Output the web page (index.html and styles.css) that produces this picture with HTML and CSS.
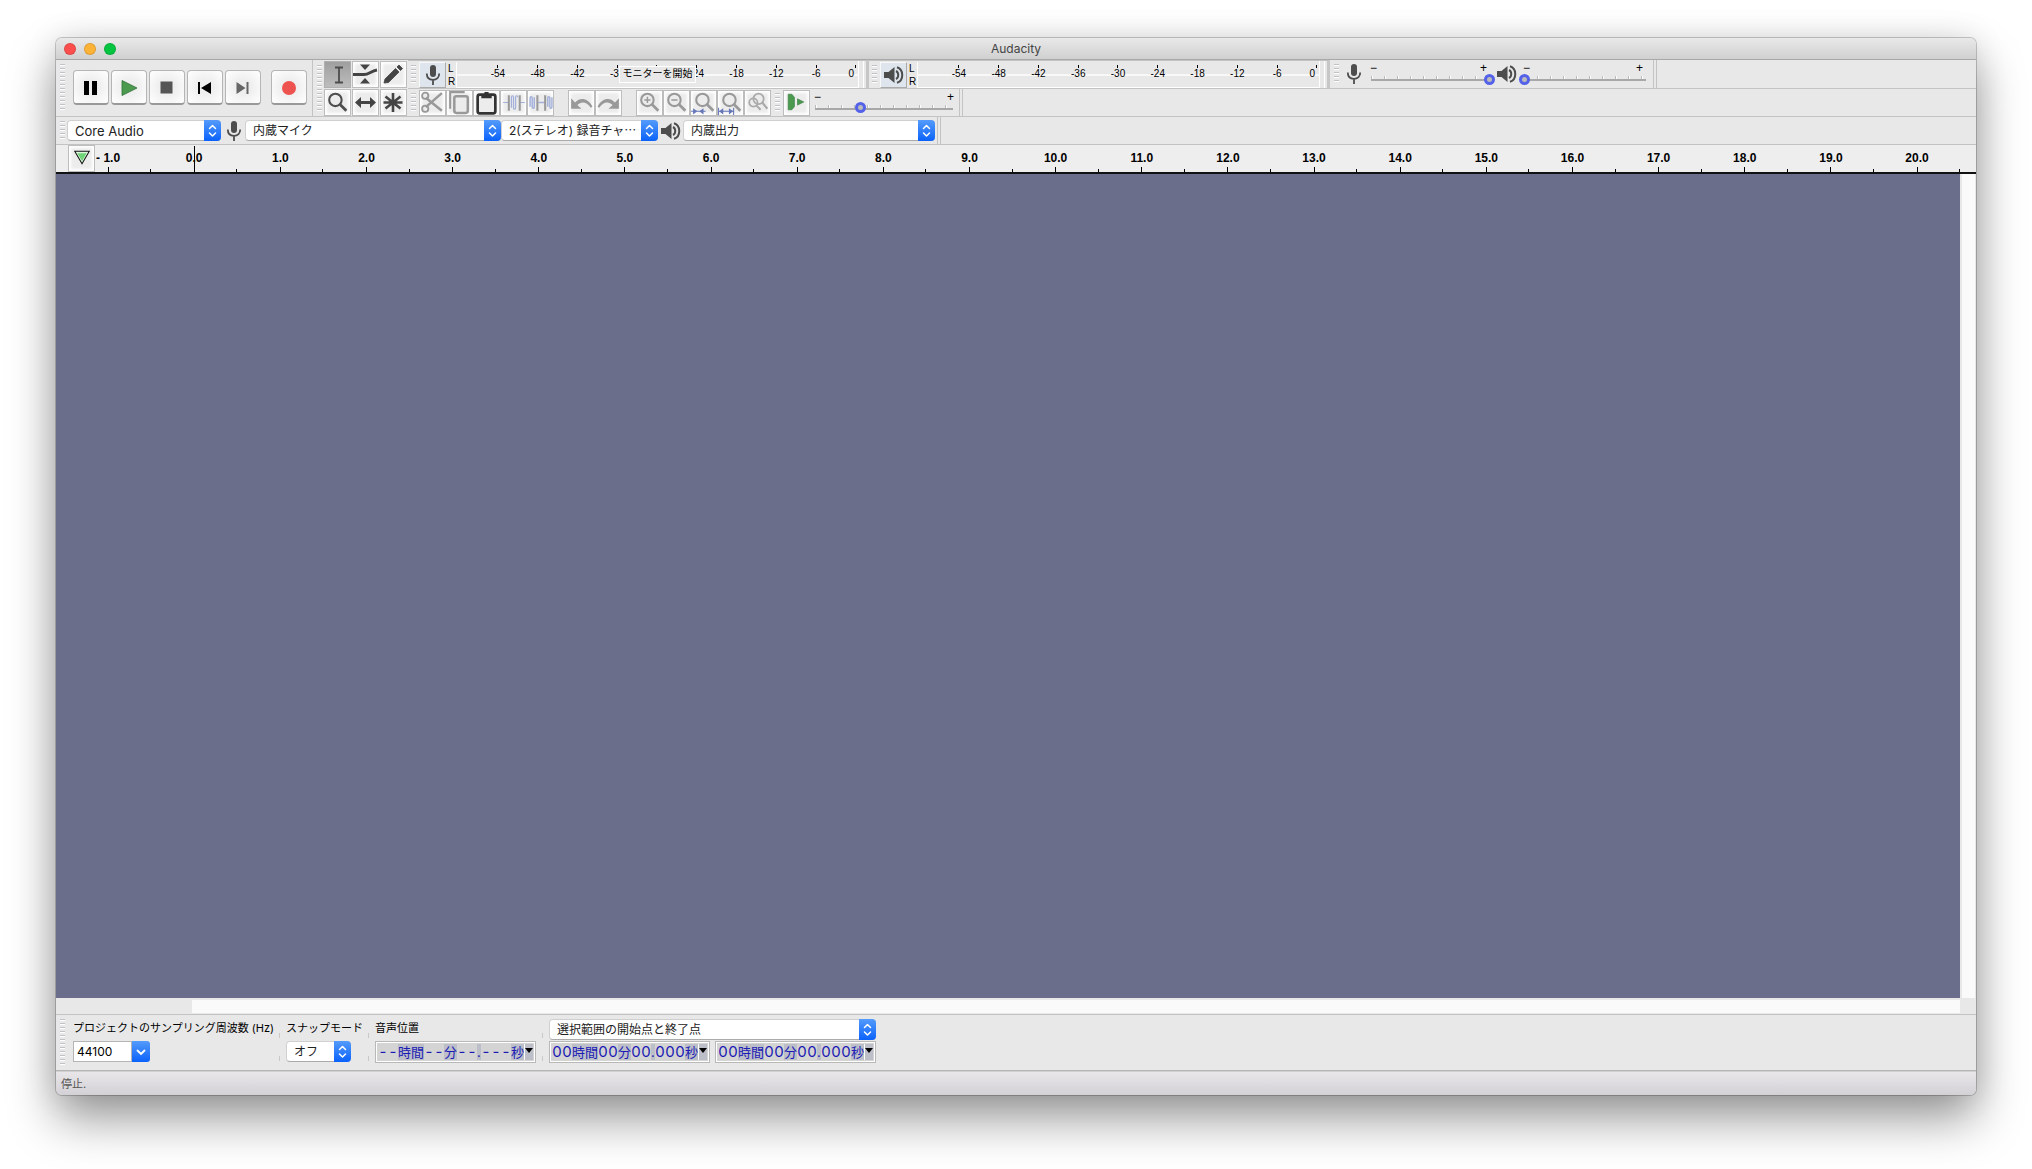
FILE: index.html
```html
<!DOCTYPE html>
<html lang="ja">
<head>
<meta charset="utf-8">
<title>Audacity</title>
<link rel="stylesheet" href="styles.css">
</head>
<body>
<svg class="defs" aria-hidden="true">
  <symbol id="cap" viewBox="0 0 17 21"><path d="M5.500 8.500l3-3 3 3M5.500 13l3 3 3-3" fill="none" stroke="#fff" stroke-width="1.500" stroke-linecap="round" stroke-linejoin="round"/></symbol>
  <symbol id="mic" viewBox="0 0 16 20"><rect x="5" y="0" width="6" height="12" rx="3" fill="#4d4d4d"/><path d="M1.800 8.500c0 4 2.500 6.300 6.200 6.300s6.200-2.300 6.200-6.300M8 15v5" fill="none" stroke="#4d4d4d" stroke-width="1.800"/></symbol>
  <symbol id="speaker" viewBox="0 0 20 18"><path d="M0 6h4.500L10.500 1v16L4.500 12H0z" fill="#4d4d4d"/><path d="M12 5c3 1.500 3 6.500 0 8M13 1.200c7 2.200 7 13.400 0 15.600" fill="none" stroke="#4d4d4d" stroke-width="2"/></symbol>
  <symbol id="lens" viewBox="0 0 26 26"><circle cx="11" cy="10.500" r="6" fill="none" stroke="currentColor" stroke-width="2"/><path d="M15.500 15l6 6" stroke="currentColor" stroke-width="2.600"/></symbol>
</svg>
<main class="window">
  <header class="titlebar">
    <div class="lights"><button class="light red" aria-label="閉じる"></button><button class="light amber" aria-label="最小化"></button><button class="light green" aria-label="拡大"></button></div>
    <h1>Audacity</h1>
  </header>

  <div class="dock">
    <section class="transport">
      <i class="grip"></i>
      <button class="big" aria-label="一時停止"><svg viewBox="0 0 36 35"><path d="M11 11h5v14h-5zM19 11h5v14h-5z"/></svg></button>
      <button class="big" aria-label="再生"><svg viewBox="0 0 36 35"><path d="M11 10.500v15l15-7.500z" fill="#4b9a50" stroke="#2d6e35" stroke-width=".8"/></svg></button>
      <button class="big" aria-label="停止"><svg viewBox="0 0 36 35"><path d="M11.500 11.500h12v12h-12z" fill="#555"/></svg></button>
      <button class="big" aria-label="先頭へ"><svg viewBox="0 0 36 35"><path d="M11 12h2v12h-2zM24 12v12l-10-6z"/></svg></button>
      <button class="big" aria-label="末尾へ"><svg viewBox="0 0 36 35"><path d="M11.500 12v12l9-6zM21.500 12h2v12h-2z" fill="#666"/></svg></button>
      <button class="big record" aria-label="録音"><svg viewBox="0 0 36 35"><circle cx="18" cy="18" r="7" fill="#ee524f"/></svg></button>
    </section>

    <section class="tools">
      <i class="grip"></i>
      <div class="tool-grid">
        <button class="tool on" aria-label="選択"><svg viewBox="0 0 27 27"><path d="M11 6.500h8M11 21.500h8M15 6.500v15" stroke="#4d4d4d" stroke-width="1.800"/></svg></button>
        <button class="tool" aria-label="エンベロープ"><svg viewBox="0 0 27 27"><path d="M8 3.500h10l-5 5.500zM8 22.500h10l-5-5.500z" fill="#444"/><path d="M1 13.500h11c5 0 7-3.500 13-4.500" fill="none" stroke="#444" stroke-width="3"/></svg></button>
        <button class="tool" aria-label="描画"><svg viewBox="0 0 27 27"><path d="M4 22l1-4L15.500 7.500l3.500 3.500L8.500 21.500zM17 6l2-2 3.500 3.500-2 2z" fill="#444" stroke="#444" stroke-width=".8"/></svg></button>
        <button class="tool dark" aria-label="ズーム"><svg viewBox="0 0 26 26"><use href="#lens"/></svg></button>
        <button class="tool" aria-label="タイムシフト"><svg viewBox="0 0 27 27"><path d="M3 13.500l6-5.500v4h9V8l6 5.500-6 5.500v-4H9v4z" fill="#444"/></svg></button>
        <button class="tool" aria-label="マルチツール"><svg viewBox="0 0 27 27"><path d="M13 4v19M3.500 13.500h19M5.500 7.500l15 12M20.500 7.500l-15 12" stroke="#444" stroke-width="2.600"/></svg></button>
      </div>
    </section>

    <div class="bars">
      <div class="bar">
        <section class="meter-bar">
          <i class="grip"></i>
          <button class="tool tinted" aria-label="録音メーター"><svg class="mic"><use href="#mic"/></svg></button>
          <div class="lr"><span>L</span><span>R</span></div>
          <div class="meter"><div class="scale"><span>-54</span><span>-48</span><span>-42</span><span>-36</span><span></span><span>-24</span><span>-18</span><span>-12</span><span>-6</span><span class="zero">0</span></div><div class="monitor">モニターを開始</div></div>
          <i class="rails"></i>
        </section>
        <section class="meter-bar play">
          <i class="grip"></i>
          <button class="tool tinted" aria-label="再生メーター"><svg class="speaker"><use href="#speaker"/></svg></button>
          <div class="lr"><span>L</span><span>R</span></div>
          <div class="meter"><div class="scale"><span>-54</span><span>-48</span><span>-42</span><span>-36</span><span>-30</span><span>-24</span><span>-18</span><span>-12</span><span>-6</span><span class="zero">0</span></div></div>
          <i class="rails"></i>
        </section>
        <section class="mixer">
          <i class="grip"></i>
          <svg class="mic"><use href="#mic"/></svg>
          <div class="slider first"><div class="signs"><span>−</span><span>+</span></div><input type="range" aria-label="録音音量" value="100"></div>
          <svg class="speaker"><use href="#speaker"/></svg>
          <div class="slider second"><div class="signs"><span>−</span><span>+</span></div><input type="range" aria-label="再生音量" value="0"></div>
        </section>
      </div>
      <div class="bar">
        <section class="edit">
          <i class="grip"></i>
          <div class="group">
            <button class="tool" aria-label="切り取り"><svg viewBox="0 0 26 26"><path d="M6.500 8.500L22 21M6.500 17.500L22 4" stroke="#999" stroke-width="2.400"/><circle cx="6" cy="6.500" r="3" fill="none" stroke="#999" stroke-width="1.800"/><circle cx="6" cy="19" r="3" fill="none" stroke="#999" stroke-width="1.800"/></svg></button>
            <button class="tool" aria-label="コピー"><svg viewBox="0 0 26 26"><rect x="8" y="7" width="13" height="16" rx="2" fill="none" stroke="#999" stroke-width="2.400"/><path d="M4 19V3h14" fill="none" stroke="#999" stroke-width="2"/></svg></button>
            <button class="tool" aria-label="貼り付け"><svg viewBox="0 0 26 26"><rect x="4.500" y="5.500" width="17" height="18" rx="2" fill="none" stroke="#333" stroke-width="2.600"/><path d="M8 9V5h3V3h4v2h3v4z" fill="#333"/></svg></button>
            <button class="tool" aria-label="トリム"><svg viewBox="0 0 26 26"><path d="M3 13h5M19 13h5M11 18V8c0-2 2-2 2 0v10c0 2 2 2 2 0V8c0-2 2-2 2 0" fill="none" stroke="#a3b0da" stroke-width="1.200"/><path d="M8.500 6v15M19 6v15" stroke="#999" stroke-width="2"/></svg></button>
            <button class="tool" aria-label="無音化"><svg viewBox="0 0 26 26"><path d="M3 17V9c0-2 2-2 2 0v8c0 2 2 2 2 0V8M20 17V9c0-2 2-2 2 0v8c0 2 2 2 2 0V8M11 13h6" fill="none" stroke="#a3b0da" stroke-width="1.400"/><path d="M10 6v15M17.500 6v15" stroke="#999" stroke-width="2"/></svg></button>
          </div>
          <div class="group">
            <button class="tool" aria-label="元に戻す"><svg viewBox="0 0 26 26"><path d="M3 9v10h10l-4-3.500c4-4 9-3 13 2.500l1.500-1C19.500 9 12 7.500 6.800 13z" fill="#999"/></svg></button>
            <button class="tool" aria-label="やり直し"><svg viewBox="0 0 26 26"><path d="M23 9v10H13l4-3.500c-4-4-9-3-13 2.500L2.500 17C6.500 9 14 7.500 19.200 13z" fill="#999"/></svg></button>
          </div>
          <div class="group">
            <button class="tool" aria-label="ズームイン"><svg viewBox="0 0 26 26"><use href="#lens"/><path d="M8 10.500h6M11 7.500v6" stroke="#999" stroke-width="1.400"/></svg></button>
            <button class="tool" aria-label="ズームアウト"><svg viewBox="0 0 26 26"><use href="#lens"/><path d="M8 10.500h6" stroke="#999" stroke-width="1.400"/></svg></button>
            <button class="tool" aria-label="選択範囲に合わせる"><svg viewBox="0 0 26 26"><use href="#lens" x="1"/><path d="M1 21.500h14" stroke="#6477b8"/><path d="M3 18.500l4 3-4 3zM13 18.500l-4 3 4 3z" fill="#6477b8"/></svg></button>
            <button class="tool" aria-label="プロジェクトに合わせる"><svg viewBox="0 0 26 26"><use href="#lens" x="1"/><path d="M2 21.500h14M1.500 18v7M16 18v7" stroke="#6477b8"/><path d="M6 18.500l-4 3 4 3zM11.500 18.500l4 3-4 3z" fill="#6477b8"/></svg></button>
            <button class="tool" aria-label="ズーム切替"><svg viewBox="0 0 26 26"><circle cx="9" cy="13" r="4" fill="none" stroke="#aaa" stroke-width="1.700"/><circle cx="14" cy="9.500" r="5" fill="none" stroke="#aaa" stroke-width="1.700"/><path d="M12 16l4 4M17.500 13l5 6" stroke="#aaa" stroke-width="2"/></svg></button>
          </div>
        </section>
        <section class="speed">
          <i class="grip"></i>
          <button class="tool" aria-label="指定速度で再生"><svg viewBox="0 0 26 26"><path d="M5 5h3.500l2.500 3v9l-2.500 3H5zM14 9.500v6l6-3z" fill="#4b9a50" stroke="#397c40" stroke-width=".6"/></svg></button>
          <div class="slider third"><div class="signs"><span>−</span><span>+</span></div><input type="range" aria-label="再生速度" value="33"></div>
        </section>
      </div>
    </div>
  </div>

  <div class="bar devices">
    <section class="device-set">
      <i class="grip"></i>
      <span class="popup host"><select aria-label="オーディオホスト"><option>Core Audio</option></select><svg><use href="#cap"/></svg></span>
      <svg class="mic"><use href="#mic"/></svg>
      <span class="popup input"><select aria-label="録音デバイス"><option>内蔵マイク</option></select><svg><use href="#cap"/></svg></span>
      <span class="popup channels"><select aria-label="録音チャンネル"><option>2(ステレオ) 録音チャ⋯</option></select><svg><use href="#cap"/></svg></span>
      <svg class="speaker"><use href="#speaker"/></svg>
      <span class="popup output"><select aria-label="再生デバイス"><option>内蔵出力</option></select><svg><use href="#cap"/></svg></span>
    </section>
  </div>

  <div class="ruler">
    <div class="ticks"><span>- 1.0</span><span class="cursor">0.0</span><span>1.0</span><span>2.0</span><span>3.0</span><span>4.0</span><span>5.0</span><span>6.0</span><span>7.0</span><span>8.0</span><span>9.0</span><span>10.0</span><span>11.0</span><span>12.0</span><span>13.0</span><span>14.0</span><span>15.0</span><span>16.0</span><span>17.0</span><span>18.0</span><span>19.0</span><span>20.0</span></div>
    <button class="tool pin" aria-label="再生ヘッド"><svg viewBox="0 0 26 26"><path d="M6.500 6h14l-7 12z" fill="#dcf5dc" stroke="#111"/><path d="M9 8h9l-4.500 7.500z" fill="#6fd477"/></svg></button>
  </div>

  <div class="tracks"><div class="canvas"></div><div class="vscroll"></div></div>
  <div class="hscroll"><div class="thumb"></div></div>

  <section class="selection">
    <i class="grip"></i>
    <div class="field rate"><label for="rate">プロジェクトのサンプリング周波数 (Hz)</label>
      <span class="combo"><input id="rate" type="text" value="44100"><button aria-label="一覧"><svg viewBox="0 0 18 21"><path d="M5.500 9.500l3.500 3.500 3.500-3.500" fill="none" stroke="#fff" stroke-width="1.800" stroke-linecap="round"/></svg></button></span></div>
    <i class="sep"></i>
    <div class="field snap"><label for="snap">スナップモード</label>
      <span class="popup"><select id="snap"><option>オフ</option></select><svg><use href="#cap"/></svg></span></div>
    <i class="sep"></i>
    <div class="field position"><span class="label">音声位置</span>
      <div class="time"><b>-</b><b>-</b><em>時間</em><b>-</b><b>-</b><em>分</em><b>-</b><b>-</b><em class="dot">.</em><b>-</b><b>-</b><b>-</b><em>秒</em><button aria-label="表示形式"></button></div></div>
    <i class="sep"></i>
    <div class="field range"><span class="popup"><select aria-label="選択範囲の表示"><option>選択範囲の開始点と終了点</option></select><svg><use href="#cap"/></svg></span>
      <div class="pair">
        <div class="time"><b>0</b><b>0</b><em>時間</em><b>0</b><b>0</b><em>分</em><b>0</b><b>0</b><em class="dot">.</em><b>0</b><b>0</b><b>0</b><em>秒</em><button aria-label="表示形式"></button></div>
        <div class="time"><b>0</b><b>0</b><em>時間</em><b>0</b><b>0</b><em>分</em><b>0</b><b>0</b><em class="dot">.</em><b>0</b><b>0</b><b>0</b><em>秒</em><button aria-label="表示形式"></button></div>
      </div></div>
  </section>
  <footer class="status">停止.</footer>
</main>
</body>
</html>
```
FILE: styles.css
```css
* { box-sizing: border-box; }
body {
  margin: 0;
  min-height: 100vh;
  padding: 38px 56px 74px;
  display: flex;
  background: #fff;
  color: #000;
  font: 12px/16px Inter, "Noto Sans CJK JP", sans-serif;
  overflow: hidden;
}
button, select, input { margin: 0; padding: 0; border: 0; font: inherit; color: inherit; appearance: none; border-radius: 0; }
svg { display: block; flex: none; }
.defs { position: absolute; width: 0; height: 0; }
.mic { width: 16px; height: 20px; }
.speaker { width: 20px; height: 18px; }

.window {
  flex: 1;
  min-width: 0;
  display: flex;
  flex-direction: column;
  background: #e8e8e8;
  border-radius: 6px;
  overflow: hidden;
  box-shadow: 0 0 0 1px rgba(0,0,0,.2), 0 24px 48px rgba(0,0,0,.4), 0 0 32px rgba(0,0,0,.1);
}
.titlebar {
  position: relative;
  height: 22px;
  display: flex;
  align-items: center;
  justify-content: center;
  background: linear-gradient(#e9e9e9, #d0d0d0);
  border-bottom: 1px solid #a8a8a8;
}
.titlebar h1 { margin: 0; font-size: 12px; font-weight: 400; color: #444; }
.lights { position: absolute; left: 8px; top: 5px; display: flex; gap: 8px; }
.light { width: 12px; height: 12px; border-radius: 6px; border: 1px solid rgba(0,0,0,.12); }
.red { background: #fc4f4d; }
.amber { background: #fdb338; }
.green { background: #04c440; }

.grip {
  flex: none;
  width: 5px;
  height: 20px;
  background: repeating-linear-gradient(#c2c2c6 0 1px, #fff 1px 2px, transparent 2px 4px);
}
.dock { display: flex; height: 57px; border-bottom: 1px solid #c3c3c3; }
.transport {
  width: 257px;
  display: flex;
  align-items: center;
  gap: 2px;
  padding: 0 0 2px 4px;
  border-right: 1px solid #c3c3c3;
}
.transport .grip { height: 46px; margin-right: 6px; }
.big {
  width: 36px;
  height: 35px;
  border: 1px solid #b5b5b5;
  border-bottom: 2px solid #999;
  border-radius: 4px;
  background: radial-gradient(#eee 30%, #fff);
}
.big svg { width: 36px; height: 35px; margin: -1px; }
.record { margin-left: 8px; }
.tools { width: 95px; display: flex; align-items: center; gap: 2px; padding-left: 4px; }
.tools .grip { height: 46px; }
.tool-grid { display: grid; grid-template-columns: repeat(3, 27px); gap: 1px; }
.tool {
  flex: none;
  width: 27px;
  height: 27px;
  display: flex;
  align-items: center;
  justify-content: center;
  border: 1px solid #bdbdbd;
  background: #ececec;
  box-shadow: inset 0 0 3px 2px #fff;
  color: #999;
}
.tool > svg[viewBox] { width: 27px; height: 27px; }
.tool.dark { color: #4d4d4d; }
.tool.on { background: linear-gradient(#9f9f9f, #bdbdbd); box-shadow: none; border-color: #b0b0b0; }
.tool.tinted { background: #dfe5ec; box-shadow: none; border-color: #f8f8f8 #aaa #aaa #f8f8f8; }

.bars { flex: 1; min-width: 0; }
.bar { height: 28px; display: flex; border-bottom: 1px solid #c3c3c3; }
.bar section { display: flex; align-items: center; flex: none; }
.bars .bar { height: 29px; }
.bars .bar:last-child { height: 27px; border: 0; }
.meter-bar { width: 461px; padding-left: 3px; border-right: 3px solid #c6c6c6; border-top: 1px solid #c3c3c3; }
.meter-bar .tool { margin-left: 3px; height: 26px; }
.lr {
  width: 10px;
  padding-left: 2px;
  display: flex;
  flex-direction: column;
  font: 10px/13px "Liberation Sans", Arial, sans-serif;
}
.meter {
  position: relative;
  width: 402px;
  height: 26px;
  padding-left: 21px;
  border-left: 1px solid #fff;
  border-bottom: 1px solid #fff;
  background: linear-gradient(#f8f8f8, #f8f8f8) 0 12px / 100% 2px no-repeat;
}
.scale {
  width: 378px;
  display: grid;
  grid-template-columns: repeat(9, 1fr) 20px;
  padding-top: 3px;
  font: 10px/12px "Liberation Sans", Arial, sans-serif;
}
.scale span { text-align: center; padding-top: 3px; background: linear-gradient(#000, #000) 50% 0 / 1px 3px no-repeat; }
.scale .zero { text-align: right; padding-right: 2px; background-position: 100% 0; }
.monitor {
  position: absolute;
  left: 162px;
  top: 4px;
  width: 77px;
  height: 17px;
  border: 1px solid #fff;
  background: #e8e8e8;
  font-size: 10px;
  line-height: 12px;
  text-align: center;
  white-space: nowrap;
}
.rails { width: 6px; height: 27px; border-left: 1px solid #fff; border-right: 1px solid #fff; }
.mixer { width: 327px; padding-left: 4px; border-right: 4px double #c3c3c3; }
.mixer > .mic { margin: 0 4px 0 7px; }
.slider { height: 24px; padding-top: 1px; }
.signs { display: flex; justify-content: space-between; padding: 0 8px 0 4px; font: 12px/10px "Liberation Sans", Arial, sans-serif; }
.slider input {
  display: block;
  width: 100%;
  height: 12px;
  background:
    linear-gradient(#a8a8a8, #a8a8a8) 50% 6px / calc(100% - 10px) 2px no-repeat,
    repeating-linear-gradient(90deg, transparent 0 5px, #bbb 5px 6px, #fff 6px 7px, transparent 7px 13px) 0 3px / calc(100% - 5px) 3px no-repeat;
}
.slider input::-webkit-slider-thumb {
  appearance: none;
  width: 11px;
  height: 11px;
  border: 3px solid #5362e8;
  border-radius: 6px;
  background: #bbb;
}
.slider.first { width: 129px; margin-right: 2px; }
.slider.second { width: 132px; margin-left: 2px; }
.slider.third { width: 148px; }
.edit { padding-left: 3px; gap: 14px; }
.edit .grip { margin-right: -11px; }
.group { display: flex; }
.edit .tool, .speed .tool { height: 26px; }
.speed { width: 192px; padding-left: 4px; border-right: 4px double #c3c3c3; }
.speed .grip { margin-right: 3px; }
.speed .signs { padding-right: 4px; }

.popup { position: relative; display: block; flex: none; height: 21px; }
.popup select {
  width: 100%;
  height: 100%;
  padding: 0 20px 0 7px;
  border: 1px solid #d0d0d0;
  border-bottom-color: #aaa;
  border-radius: 4px;
  background: #fff;
  color: #222;
}
.popup svg {
  position: absolute;
  right: 0;
  top: 0;
  width: 17px;
  height: 21px;
  border-radius: 0 4px 4px 0;
  background: linear-gradient(#549bfb, #0a62fb);
  pointer-events: none;
}
.device-set { width: 885px; padding-left: 4px; border-right: 4px double #c3c3c3; }
.host { width: 154px; margin: 0 5px 0 2px; }
.host select { font-size: 13px; }
.input { width: 256px; margin-left: 3px; }
.channels { width: 157px; margin-right: 3px; }
.output { width: 252px; margin-left: 2px; }

.ruler {
  position: relative;
  height: 29px;
  padding: 0 16px 0 9px;
  background: #eee;
  border-bottom: 2px solid #111;
}
.ticks { display: flex; height: 27px; font: bold 12px/16px "Liberation Sans", Arial, sans-serif; }
.ticks span {
  flex: 1 1 0;
  padding-top: 5px;
  text-align: center;
  background: linear-gradient(#000, #000) 50% 100% / 1px 5px no-repeat, linear-gradient(#000, #000) 100% 100% / 1px 3px no-repeat;
}
.ticks .cursor { background-size: 1px 26px, 1px 3px; }
.pin { position: absolute; left: 12px; top: 0; }

.tracks { flex: 1; display: flex; }
.canvas { flex: 1; background: #6b6e8b; }
.vscroll { width: 16px; border-left: 2px solid #e8e8e8; border-right: 1px solid #e8e8e8; background: #fafafa; }
.hscroll { height: 16px; padding: 2px 16px 1px 136px; }
.thumb { height: 13px; background: #fafafa; }

.selection {
  height: 57px;
  display: flex;
  padding: 4px 4px 0;
  border-top: 1px solid #c3c3c3;
  border-bottom: 1px solid #b5b5b5;
}
.selection .grip { height: 46px; margin-right: 8px; }
.field { display: flex; flex-direction: column; gap: 1px; }
.field label, .label { height: 21px; padding-top: 1px; font-size: 11px; white-space: nowrap; }
.rate { width: 200px; }
.combo { display: flex; height: 21px; }
.combo input { width: 59px; padding-left: 3px; border: 1px solid #b5b5b5; background: #fff; }
.combo button { width: 18px; background: linear-gradient(#549bfb, #0a62fb); border-radius: 0 3px 3px 0; }
.sep {
  width: 1px;
  height: 28px;
  margin: 14px 6px 0;
  background: linear-gradient(#c8c8c8 0 5px, transparent 5px 23px, #c8c8c8 23px);
}
.snap { width: 76px; }
.snap .popup { width: 65px; }
.position { width: 161px; }
.range { width: 327px; }
.pair { display: flex; gap: 5px; }
.time {
  width: 161px;
  height: 22px;
  display: flex;
  border: 1px solid #b8b8b8;
  outline: 1px solid #fff;
  outline-offset: -2px;
  padding: 2px;
  background: #d4d4d4;
  color: #1a1ab4;
  font: 15px/16px Inter, "Noto Sans CJK JP", sans-serif;
  white-space: nowrap;
}
.time b { flex: none; width: 10px; font-weight: 400; text-align: center; }
.time em { flex: none; font-style: normal; font-size: 13px; background: #bcbfc8; }
.time .dot { width: 4px; }
.time button { flex: 1; display: flex; justify-content: center; padding-top: 4px; background: #bcbfc8; border-left: 1px solid #fff; }
.time button::before { content: ""; width: 0; border: 4px solid transparent; border-top: 5px solid #000; border-bottom: 0; }

.status { height: 24px; padding: 4px 5px; background: linear-gradient(#e8e6e9, #d3d1d5); border-top: 1px solid #d0d0d0; font-size: 11px; color: #555; }
```
